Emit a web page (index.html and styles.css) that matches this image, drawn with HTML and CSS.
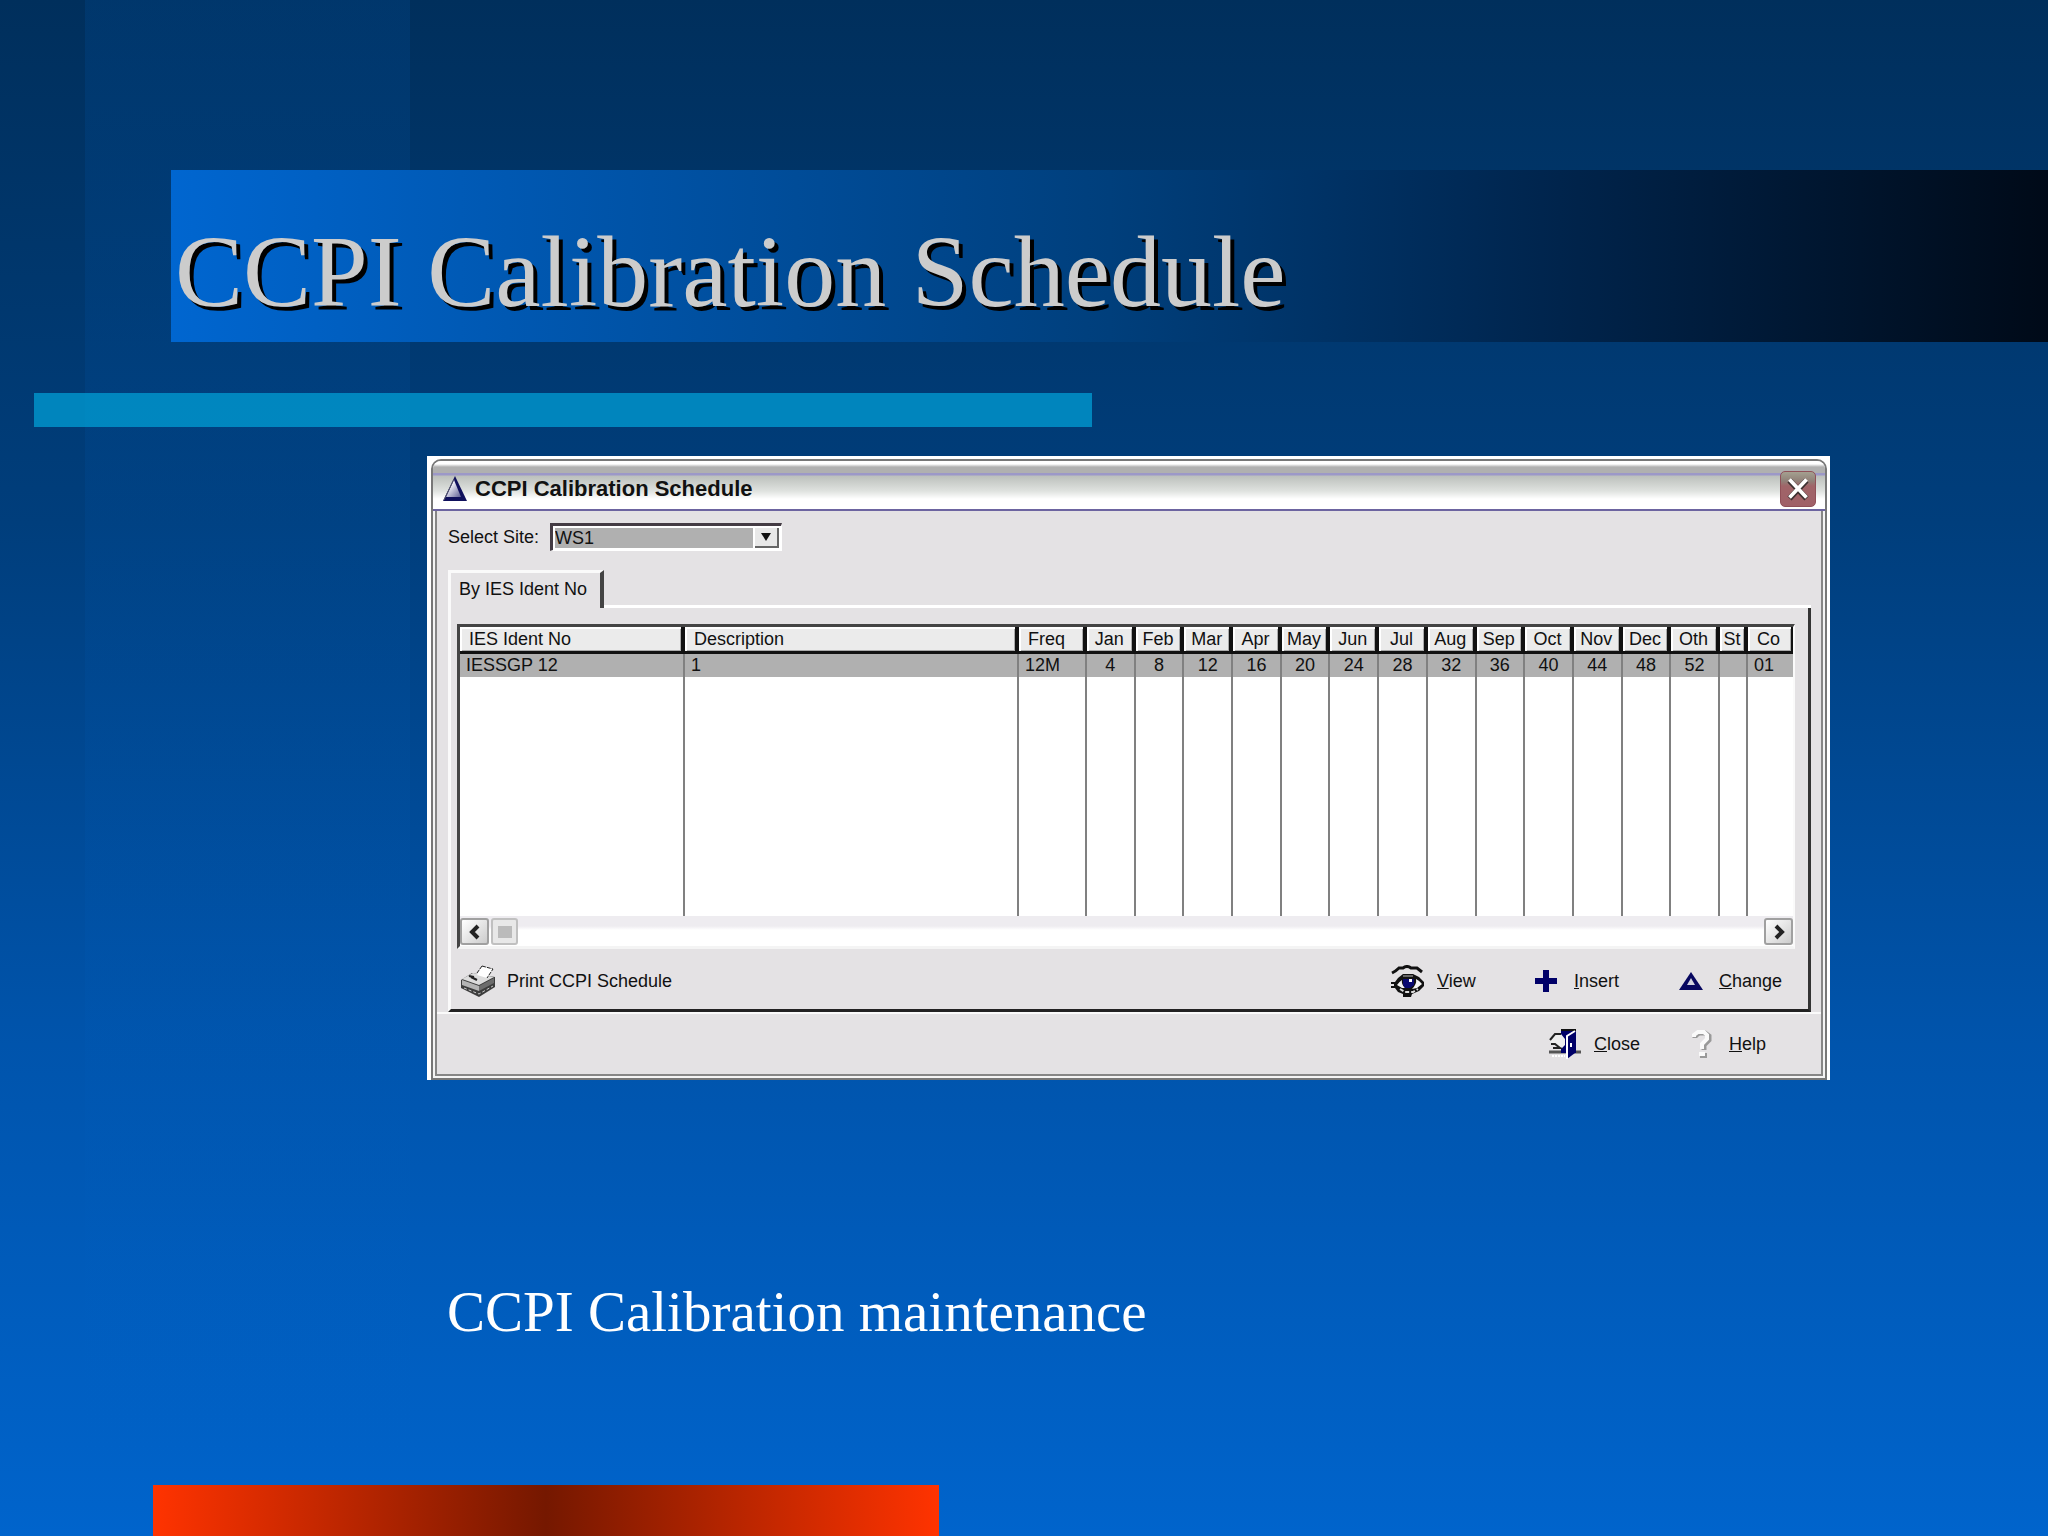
FILE: index.html
```html
<!DOCTYPE html>
<html lang="en">
<head>
<meta charset="utf-8">
<title>CCPI Calibration Schedule</title>
<link rel="stylesheet" href="styles.css">
</head>
<body>
<main class="slide">
  <h1 class="slide-title">CCPI Calibration Schedule</h1>
  <div class="accent-bar"></div>

  <section class="window-frame">
    <div class="window">
      <header class="titlebar">
        <svg class="app-icon" viewBox="0 0 24 26" aria-hidden="true">
          <defs><linearGradient id="tri" x1="0" y1="0" x2="1" y2="1"><stop offset="0.3" stop-color="#f4f4fa"/><stop offset="1" stop-color="#5c5c92"/></linearGradient></defs>
          <path d="M12 0L24 25H0z" fill="#10105c"/>
          <path d="M11 4L18 21H3z" fill="url(#tri)"/>
          <path d="M1 24L11 3" stroke="#55556a" stroke-width="1"/>
        </svg>
        <h2 class="window-title">CCPI Calibration Schedule</h2>
        <button class="window-close" type="button" aria-label="Close window">
          <svg viewBox="0 0 36 36" aria-hidden="true"><path d="M9 9L27 28M27 9L9 28" stroke="#3c3030" stroke-width="6"/><path d="M9 8L27 27M27 8L9 27" stroke="#fff" stroke-width="4"/></svg>
        </button>
      </header>

      <div class="window-body">
        <div class="site-row">
          <label for="site">Select Site:</label>
          <span class="combo">
            <select id="site"><option>WS1</option></select>
            <span class="combo-arrow"><svg viewBox="0 0 10 8" aria-hidden="true"><path d="M0 0H10L5 8z" fill="#111"/></svg></span>
          </span>
        </div>

        <div class="tabs">
          <button class="tab" type="button">By IES Ident No</button>
          <div class="tab-line"></div>
        </div>

        <div class="panel">
          <div class="browse">
            <table class="grid">
              <colgroup><col class="c-ident"><col class="c-desc"><col class="c-freq"><col span="13"><col class="c-st"><col class="c-co"></colgroup>
              <thead>
                <tr><th class="left">IES Ident No</th><th class="left">Description</th><th class="left">Freq</th><th>Jan</th><th>Feb</th><th>Mar</th><th>Apr</th><th>May</th><th>Jun</th><th>Jul</th><th>Aug</th><th>Sep</th><th>Oct</th><th>Nov</th><th>Dec</th><th>Oth</th><th>St</th><th class="left">Co</th></tr>
              </thead>
              <tbody>
                <tr class="selected"><td class="left">IESSGP 12</td><td class="left">1</td><td class="left">12M</td><td>4</td><td>8</td><td>12</td><td>16</td><td>20</td><td>24</td><td>28</td><td>32</td><td>36</td><td>40</td><td>44</td><td>48</td><td>52</td><td></td><td class="left">01</td></tr>
                <tr class="empty"><td></td><td></td><td></td><td></td><td></td><td></td><td></td><td></td><td></td><td></td><td></td><td></td><td></td><td></td><td></td><td></td><td></td><td></td></tr>
              </tbody>
            </table>
            <div class="scrollbar">
              <button class="scroll-button" type="button" aria-label="Scroll left"><svg viewBox="0 0 12 16" aria-hidden="true"><path d="M9 2L3 8L9 14" fill="none" stroke="#222" stroke-width="4"/></svg></button>
              <div class="scroll-thumb"><span class="grip"></span></div>
              <button class="scroll-button scroll-end" type="button" aria-label="Scroll right"><svg viewBox="0 0 12 16" aria-hidden="true"><path d="M3 2L9 8L3 14" fill="none" stroke="#222" stroke-width="4"/></svg></button>
            </div>
          </div>

          <div class="toolbar">
            <button class="action print" type="button">
              <svg class="icon" viewBox="0 0 34 32" aria-hidden="true">
                <path d="M0 15L11 8L34 12V22L18 32L0 23z" fill="#3c3c3c"/>
                <path d="M1 14L12 8L33 12L18 20z" fill="#dcdcdc"/>
                <path d="M1 15L18 21V26L1 20z" fill="#b4b4b4"/>
                <path d="M18 21L33 13V18L18 26z" fill="#6c6c6c"/>
                <path d="M3 23L18 29L32 21" fill="none" stroke="#ccc" stroke-dasharray="3 2"/>
                <path d="M16 10L21 1L32 4L26 13z" fill="#fff"/>
                <path d="M21 1L32 4L26 13M21 1L16 8" fill="none" stroke="#222" stroke-dasharray="4 1"/>
                <path d="M10 12L16 15M8 11L13 12" stroke="#222" stroke-width="2"/>
              </svg>
              Print CCPI Schedule
            </button>
            <button class="action view" type="button">
              <svg class="icon" viewBox="0 0 34 32" aria-hidden="true">
                <path d="M1 8Q5 6 8 3H12Q16 0 20 3H26L31 7" fill="none" stroke="#111" stroke-width="3"/>
                <path d="M0 17H4L7 13L12 9H22L28 12L33 17V21L28 26L21 29L20 32H12V29L7 27L4 23H0V21H3V19H0z" fill="#111"/>
                <path d="M6 20Q8 17 11 15Q10 19 14 23L11 23zM25 14Q29 16 31 19L26 23L21 24Q26 19 25 14z" fill="#f4f4f4"/>
                <path d="M9 24L14 27H22L27 24" fill="none" stroke="#ddd" stroke-width="2" stroke-dasharray="4 2"/>
                <path d="M12 11L22 11" stroke="#bbb"/>
                <path d="M12 14H23V20L19 23H14L12 20z" fill="#080870"/><path d="M18 14h3v3h-3z" fill="#fff"/>
              </svg>
              <span><u>V</u>iew</span>
            </button>
            <button class="action insert" type="button">
              <svg class="icon-small" viewBox="0 0 24 24" aria-hidden="true"><path d="M9 1H15V9H23V15H15V23H9V15H1V9H9z" fill="#000068"/></svg>
              <span><u>I</u>nsert</span>
            </button>
            <button class="action change" type="button">
              <svg class="icon-small" viewBox="0 0 24 24" aria-hidden="true"><path d="M12 3L24 21H0z" fill="#080860"/><path d="M12 9L16 16H8z" fill="#d4d4e0"/></svg>
              <span><u>C</u>hange</span>
            </button>
          </div>
        </div>

        <footer class="footer">
          <button class="action close" type="button">
            <svg class="icon" viewBox="0 0 34 32" aria-hidden="true">
              <path d="M1 24H33" stroke="#555" stroke-width="3"/>
              <path d="M13 1H28V25H13z" fill="#000068"/>
              <path d="M13 2H28" stroke="#111" stroke-width="2"/>
              <path d="M2 12L7 6H13L17 11V17L14 20L7 16H3z" fill="#eee"/>
              <path d="M2 12L7 6H13M3 16H7L12 20H5" fill="none" stroke="#222" stroke-width="2"/>
              <path d="M19 8L27 3V25L19 31z" fill="#000068"/>
              <path d="M19 31V8L27 3" fill="none" stroke="#fff" stroke-width="2"/>
              <path d="M23 15V19" stroke="#fff" stroke-width="2"/>
              <path d="M4 28H17" stroke="#fff" stroke-width="2" stroke-dasharray="2 1"/>
            </svg>
            <span><u>C</u>lose</span>
          </button>
          <button class="action help" type="button">
            <svg class="icon-small help-icon" viewBox="0 0 22 30" aria-hidden="true">
              <path d="M4 9V7L8 4H14L18 7V11L13 16V21" fill="none" stroke="#999" stroke-width="5"/>
              <path d="M3 8V6L7 3H13L16 6V10L11 15V20" fill="none" stroke="#fafafa" stroke-width="4"/>
              <path d="M9 24H16V29H9z" fill="#999"/><path d="M8 23H14V27H8z" fill="#fafafa"/>
            </svg>
            <span><u>H</u>elp</span>
          </button>
        </footer>
      </div>
    </div>
  </section>

  <p class="caption">CCPI Calibration maintenance</p>
  <div class="bottom-bar"></div>
</main>
</body>
</html>
```
FILE: styles.css
```css
* { box-sizing: border-box; }

body {
  margin: 0;
  font-family: "Liberation Sans", Arial, sans-serif;
  font-size: 18px;
  line-height: 24px;
  color: #111;
}

button, select { font: inherit; color: inherit; }

/* Slide */
.slide {
  display: flex;
  flex-direction: column;
  min-height: 100vh;
  padding-top: 170px;
  background:
    linear-gradient(rgba(0, 82, 164, 0.22), rgba(0, 100, 200, 0.1) 60%, rgba(0, 100, 200, 0)) 85px 0 / 325px 100% no-repeat,
    linear-gradient(#002f5c, #003e7c 34%, #0054ac 68%, #0064cc);
}

.slide-title {
  margin: 0 0 0 171px;
  padding: 44px 4px 12px;
  background: linear-gradient(90deg, #0066d0, #003f7c 50%, #00254e 73%, #000a18);
  color: #ccc;
  font: 102px/116px "Liberation Serif", "Times New Roman", serif;
  text-shadow: 4px 4px 0 #000;
}

.accent-bar {
  width: 1058px;
  max-width: 100%;
  height: 34px;
  margin: 51px 0 0 34px;
  background: rgba(0, 152, 208, 0.8);
}

.caption {
  margin: 200px 0 64px 447px;
  color: #fff;
  font: 57px/64px "Liberation Serif", "Times New Roman", serif;
}

.bottom-bar {
  width: 786px;
  max-width: 100%;
  height: 51px;
  margin: auto 0 0 153px;
  background: linear-gradient(90deg, #ff3300, #751800 50%, #ff3300);
}

/* Window chrome */
.window-frame {
  margin: 29px 218px 0 427px;
  padding: 3px 3px 0 4px;
  background: #fff;
}

.window {
  border: 2px solid #777;
  border-radius: 10px 10px 0 0;
  padding: 0 2px 2px;
  background: #f4f4f4;
}

.titlebar {
  display: flex;
  align-items: center;
  gap: 8px;
  height: 50px;
  margin: 0 -2px;
  padding: 7px 9px 0 10px;
  border-bottom: 2px solid #6c64a0;
  border-radius: 8px 8px 0 0;
  background: linear-gradient(#fff 0, #fff 3px, #b0b0b0 6px, #b0b0b0 12px, #9c98c8 12px, #9c98c8 14px, #bcc0bc 15px, #dfe2df 30px, #fff 38px);
}

.app-icon { width: 24px; height: 26px; }

.window-title {
  flex: 1;
  margin: 0;
  font: bold 22px/24px "Liberation Sans", Arial, sans-serif;
}

.window-close {
  display: grid;
  width: 36px;
  height: 36px;
  padding: 0;
  border: 1px solid #905058;
  border-radius: 5px;
  background: linear-gradient(#a4a090 0, #908078 9px, #a06468 14px, #a06068);
}

.window-body {
  border: 2px solid #868686;
  border-top: 0;
  background: #e4e2e4;
}

/* Site selector */
.site-row {
  display: flex;
  align-items: center;
  gap: 10px;
  padding: 12px 0 0 11px;
}

.site-row label { width: 92px; white-space: nowrap; }

.combo {
  display: grid;
  width: 232px;
  height: 28px;
  padding: 2px;
  border: solid;
  border-width: 3px 1px 1px 3px;
  border-color: #443c44 #fff #fff #443c44;
  background: #fff;
}

.combo select {
  grid-area: 1 / 1;
  width: 198px;
  padding: 0;
  border: 0;
  border-radius: 0;
  appearance: none;
  background: #b0b0b0;
  line-height: 20px;
}

.combo-arrow {
  grid-area: 1 / 1;
  justify-self: end;
  display: grid;
  place-items: center;
  width: 24px;
  border: solid #666;
  border-width: 0 2px 2px 0;
  background: #e8e8e8;
  pointer-events: none;
}

.combo-arrow svg { width: 10px; height: 8px; }

/* Tab strip and panel */
.tabs {
  display: flex;
  align-items: flex-end;
  margin: 19px 10px 0 11px;
}

.tab {
  width: 156px;
  height: 38px;
  padding: 0 0 4px 8px;
  border: solid;
  border-width: 3px 4px 0 3px;
  border-color: #fafafa #444 transparent #fafafa;
  background: none;
  text-align: left;
  white-space: nowrap;
}

.tab-line { flex: 1; height: 3px; background: #fff; }

.panel {
  margin: 0 10px 0 11px;
  padding: 16px 13px 0 6px;
  border: solid;
  border-width: 0 3px 3px;
  border-color: #222 #333 #222 #fafafa;
}

.browse {
  border: solid;
  border-width: 3px 2px 3px 3px;
  border-color: #444 #fafafa #f4f4f4 #444;
  background: #fff;
}

.grid {
  width: 100%;
  table-layout: fixed;
  border-collapse: separate;
  border-spacing: 0;
}

.c-ident { width: 225px; }
.c-desc { width: 334px; }
.c-freq { width: 68px; }
.c-st { width: 28px; }
.c-co { width: 45px; }

.grid th {
  height: 27px;
  padding: 0;
  border-right: 4px solid #111;
  border-bottom: 3px solid #111;
  background: #ebebeb;
  box-shadow: inset 2px 2px #fff, inset -1px -1px #aaa;
  font-weight: normal;
  line-height: 24px;
  white-space: nowrap;
}

.grid td {
  height: 23px;
  padding: 0;
  border-right: 2px solid #808080;
  line-height: 23px;
  text-align: center;
  white-space: nowrap;
}

.grid th:last-child { border-right-width: 2px; }
.grid td:last-child { border-right: 0; }
.grid th.left { padding-left: 9px; text-align: left; }
.grid td.left { padding-left: 6px; text-align: left; }
.selected td { background: #b0b0b0; }
.grid .empty td { height: 239px; }

.scrollbar {
  display: flex;
  gap: 2px;
  height: 30px;
  padding: 2px 0 1px;
  background: linear-gradient(#eeecf0, #eeecf0 10px, #fff 14px, #fff);
}

.scroll-button, .scroll-thumb {
  display: grid;
  place-items: center;
  width: 29px;
  padding: 0;
  border: 2px solid #a0a0a0;
  border-radius: 3px;
  background: linear-gradient(135deg, #fff, #ccc);
}

.scroll-thumb { width: 27px; border-color: #c0c0c0; background: #e8e8e8; }
.scroll-button svg { width: 12px; height: 16px; }
.scroll-end { margin-left: auto; }
.grip { width: 14px; height: 12px; background: #bbb; }

/* Action buttons */
.toolbar, .footer {
  display: flex;
  align-items: center;
}

.toolbar { height: 60px; padding-top: 4px; }

.action {
  display: flex;
  align-items: center;
  gap: 12px;
  padding: 0;
  border: 0;
  background: none;
  white-space: nowrap;
}

.print { margin: 0 auto 0 4px; }
.view { width: 143px; }
.insert { width: 145px; gap: 16px; }
.change { width: 116px; gap: 16px; }

.icon { width: 34px; height: 32px; }
.icon-small { width: 24px; height: 24px; }
.help-icon { width: 22px; height: 30px; }

.footer {
  justify-content: flex-end;
  height: 62px;
  border-top: 2px solid #fafafa;
  padding-right: 36px;
}

.close { width: 143px; }
.help { width: 94px; gap: 16px; }
```
